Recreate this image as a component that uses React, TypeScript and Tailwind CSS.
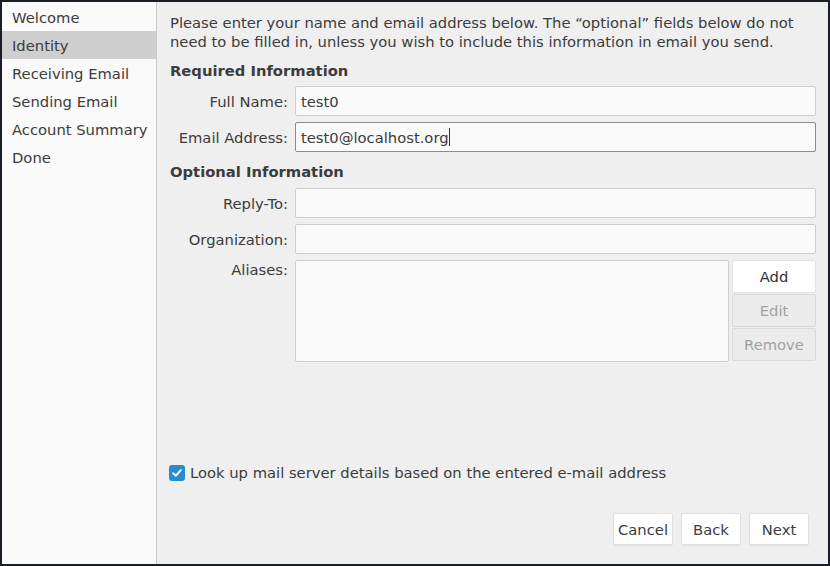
const steps = ["Welcome", "Identity", "Receiving Email", "Sending Email", "Account Summary", "Done"];

function Field({ label, value, focused }: { label: string; value?: string; focused?: boolean }) {
  return (
    <div className="flex items-center h-[30px]">
      <div className="w-[118px] text-right">{label}</div>
      <div
        className={
          "ml-[7px] flex-1 h-full flex items-center px-[5px] bg-[#fafafa] border rounded-[2px] " +
          (focused ? "border-[#8c8c8c]" : "border-[#cdcdcd]")
        }
      >
        <span>{value}</span>
        {focused && <span className="w-px h-[18px] bg-[#2e2e2e]" />}
      </div>
    </div>
  );
}

export default function App() {
  return (
    <div
      className="w-[830px] h-[566px] bg-[#1b1e26] p-[2px] text-[14.75px] leading-[19px] text-[#3c3c3c]"
      style={{ fontFamily: '"DejaVu Sans", sans-serif' }}
    >
      <div className="flex h-full w-full">
        {/* sidebar */}
        <div className="w-[155px] bg-[#fafafa] border-r border-[#cbcbcb] pt-[1px]">
          {steps.map((s) => (
            <div
              key={s}
              className={"h-[28px] flex items-center pl-[10px] " + (s === "Identity" ? "bg-[#cfcfcf]" : "")}
            >
              {s}
            </div>
          ))}
        </div>

        {/* main */}
        <div className="flex-1 bg-[#efefef] flex flex-col pl-[13px] pr-[12px] pt-[11px] pb-[19px]">
          <p>
            Please enter your name and email address below. The “optional” fields below do not need to be filled in,
            unless you wish to include this information in email you send.
          </p>

          <div className="font-bold mt-[10px] h-[20px]">Required Information</div>
          <div className="mt-[5px] flex flex-col gap-[6px]">
            <Field label="Full Name:" value="test0" />
            <Field label="Email Address:" value="test0@localhost.org" focused />
          </div>

          <div className="font-bold mt-[10px] h-[20px]">Optional Information</div>
          <div className="mt-[6px] flex flex-col gap-[6px]">
            <Field label="Reply-To:" />
            <Field label="Organization:" />
            <div className="flex">
              <div className="w-[118px] text-right">Aliases:</div>
              <div className="ml-[7px] flex-1 h-[102px] bg-[#fafafa] border border-[#cdcdcd] rounded-[2px]" />
              <div className="ml-[3px] w-[84px] flex flex-col gap-px">
                <div className="h-[33px] bg-white border border-[#e2e2e2] rounded-[2px] flex items-center justify-center text-[#2e3436]">
                  Add
                </div>
                <div className="h-[33px] bg-[#ececec] border border-[#d9d9d9] rounded-[2px] flex items-center justify-center text-[#a2a2a2]">
                  Edit
                </div>
                <div className="h-[33px] bg-[#ececec] border border-[#d9d9d9] rounded-[2px] flex items-center justify-center text-[#a2a2a2]">
                  Remove
                </div>
              </div>
            </div>
          </div>

          <div className="flex-1" />

          <div className="flex items-center gap-[5px] -ml-px">
            <div className="w-[16px] h-[16px] rounded-[3px] bg-[#2a8cd0] flex items-center justify-center">
              <svg width="12" height="12" viewBox="0 0 12 12">
                <path d="M2.2 6.3 L4.8 8.8 L9.8 3.2" stroke="white" strokeWidth="2" fill="none" strokeLinecap="round" strokeLinejoin="round" />
              </svg>
            </div>
            <span>Look up mail server details based on the entered e-mail address</span>
          </div>

          <div className="mt-[31px] flex justify-end gap-[8px] pr-[7px]">
            {["Cancel", "Back", "Next"].map((b) => (
              <div
                key={b}
                className="w-[60px] h-[32px] bg-white border border-[#e0e0e0] rounded-[2px] shadow-[0_1px_1px_rgba(0,0,0,0.06)] flex items-center justify-center"
              >
                {b}
              </div>
            ))}
          </div>
        </div>
      </div>
    </div>
  );
}
